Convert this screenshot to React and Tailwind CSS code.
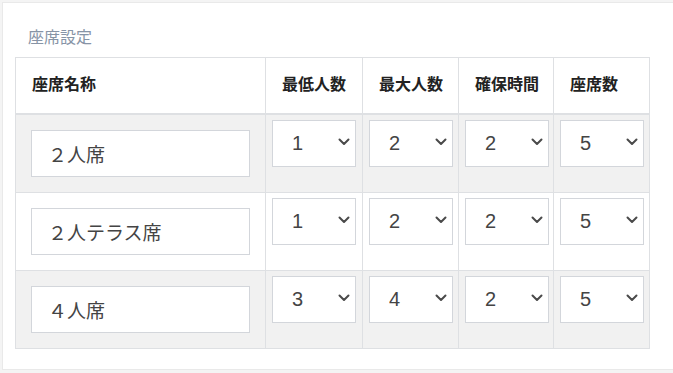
import { useState } from 'react'

const rows = [
  { name: '２人席', min: 1, max: 2, time: 2, seats: 5 },
  { name: '２人テラス席', min: 1, max: 2, time: 2, seats: 5 },
  { name: '４人席', min: 3, max: 4, time: 2, seats: 5 },
]

function Chevron() {
  return (
    <svg className="pointer-events-none absolute right-[6px] top-[18px]" width="12" height="8" viewBox="0 0 12 8" fill="none">
      <path d="M1.5 1.5L6 6L10.5 1.5" stroke="#4a4a4a" strokeWidth="2" strokeLinecap="round" strokeLinejoin="round" />
    </svg>
  )
}

function NumSelect({ value }) {
  const [v, setV] = useState(value)
  return (
    <div className="relative w-[84px]">
      <select
        value={v}
        onChange={(e) => setV(e.target.value)}
        className="h-[47px] w-full appearance-none border border-[#d3d6db] bg-white pl-[19px] text-[20px] text-[#444] outline-none"
      >
        {[1, 2, 3, 4, 5, 6, 7, 8, 9].map((n) => (
          <option key={n} value={n}>{n}</option>
        ))}
      </select>
      <Chevron />
    </div>
  )
}

export default function App() {
  return (
    <div className="h-[373px] w-[673px] overflow-hidden bg-[#f4f4f4] pl-[2px] pt-[2px] font-['Liberation_Sans','Noto_Sans_CJK_JP',sans-serif]">
      <div className="h-[368px] w-[700px] border border-[#e9e9e9] bg-white pl-[12px] pt-[23px]">
        <div className="mb-[7px] pl-[13px] text-[16px] leading-[24px] text-[#8794a6]">座席設定</div>
        <table className="w-[634px] table-fixed border-collapse">
          <colgroup>
            <col className="w-[250px]" />
            <col className="w-[97px]" />
            <col className="w-[96px]" />
            <col className="w-[95px]" />
            <col className="w-[96px]" />
          </colgroup>
          <thead>
            <tr className="h-[56px] text-left text-[16px] font-bold text-[#222]">
              <th className="border border-b-2 border-[#dee0e3] pl-[16px]">座席名称</th>
              <th className="border border-b-2 border-[#dee0e3] pl-[16px]">最低人数</th>
              <th className="border border-b-2 border-[#dee0e3] pl-[16px]">最大人数</th>
              <th className="border border-b-2 border-[#dee0e3] pl-[16px]">確保時間</th>
              <th className="border border-b-2 border-[#dee0e3] pl-[16px]">座席数</th>
            </tr>
          </thead>
          <tbody>
            {rows.map((r, i) => (
              <tr key={i} className={i % 2 === 0 ? 'bg-[#f1f1f1]' : 'bg-white'}>
                <td className="border border-[#dee0e3] px-[15px] py-[15px] align-top">
                  <input
                    defaultValue={r.name}
                    className="h-[47px] w-[219px] border border-[#d3d6db] bg-white pl-[16px] text-[19px] text-[#444] outline-none"
                  />
                </td>
                <td className="border border-[#dee0e3] px-[6px] pt-[5px] align-top"><NumSelect value={r.min} /></td>
                <td className="border border-[#dee0e3] px-[6px] pt-[5px] align-top"><NumSelect value={r.max} /></td>
                <td className="border border-[#dee0e3] px-[6px] pt-[5px] align-top"><NumSelect value={r.time} /></td>
                <td className="border border-[#dee0e3] px-[6px] pt-[5px] align-top"><NumSelect value={r.seats} /></td>
              </tr>
            ))}
          </tbody>
        </table>
      </div>
    </div>
  )
}
